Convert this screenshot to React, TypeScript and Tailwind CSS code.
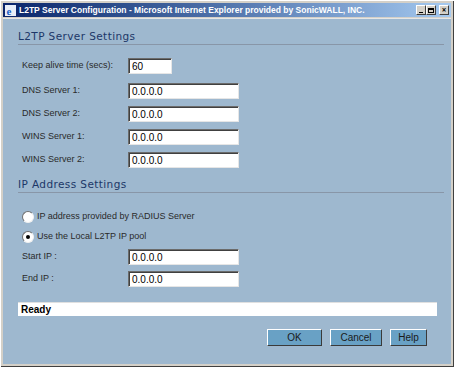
import React from "react";

const sans = "font-['Liberation_Sans',Arial,sans-serif]";

function TextBox({ value, w = "w-[111px]" }: { value: string; w?: string }) {
  return (
    <div
      className={`${w} h-[16px] bg-white border border-t-[#6b6b6b] border-l-[#6b6b6b] border-r-[#e6e6e6] border-b-[#e6e6e6] shadow-[inset_1px_1px_0_#404040] pl-[3px] flex items-center text-[10px] text-black ${sans}`}
    >
      {value}
    </div>
  );
}

function Row({ label, value, w, className = "" }: { label: string; value: string; w?: string; className?: string }) {
  return (
    <div className={`flex items-center h-[16px] ${className}`}>
      <span className={`w-[110px] pl-[4px] text-[9px] text-[#2a2a2a] ${sans}`}>{label}</span>
      <TextBox value={value} w={w} />
    </div>
  );
}

function Heading({ title, className = "" }: { title: string; className?: string }) {
  return (
    <div className={`mr-[7px] border-b border-[#8896a8] h-[14px] flex items-end ${className}`}>
      <span className="font-['DejaVu_Sans',Verdana,sans-serif] text-[10.5px] leading-[14px] tracking-[0.4px] text-[#1c3768] pb-[1px]">
        {title}
      </span>
    </div>
  );
}

function Radio({ checked, label, className = "" }: { checked?: boolean; label: string; className?: string }) {
  return (
    <div className={`flex items-center h-[12px] pl-[4px] ${className}`}>
      <span className="w-[12px] h-[12px] rounded-full bg-white border border-t-[#707070] border-l-[#707070] border-r-[#f0f0f0] border-b-[#f0f0f0] flex items-center justify-center">
        {checked && <span className="w-[4px] h-[4px] rounded-full bg-black" />}
      </span>
      <span className={`ml-[3px] text-[9px] text-[#2a2a2a] ${sans}`}>{label}</span>
    </div>
  );
}

function Btn({ label, w }: { label: string; w: string }) {
  return (
    <button
      className={`${w} h-[17px] bg-[#69a1c5] border border-t-white border-l-white border-r-[#3a3a3a] border-b-[#3a3a3a] text-[10px] text-[#1a1a1a] ${sans}`}
    >
      {label}
    </button>
  );
}

function TitleBtn({ children }: { children: React.ReactNode }) {
  return (
    <span className="w-[10px] h-[10px] bg-[#d4d0c8] border border-t-white border-l-white border-r-[#404040] border-b-[#404040] flex items-end justify-center">
      {children}
    </span>
  );
}

export default function App() {
  return (
    <div className="w-[454px] h-[367px] bg-[#d4d0c8] p-[3px] shadow-[inset_1px_1px_0_#fff,inset_-1px_-1px_0_#404040] flex flex-col">
      {/* title bar */}
      <div className="h-[14px] bg-gradient-to-r from-[#0a246a] to-[#a6caf0] flex items-center pl-[2px] pr-[2px]">
        <svg width="11" height="11" viewBox="0 0 11 11" className="shrink-0">
          <rect x="0" y="0" width="11" height="11" fill="#e8eef8" />
          <text x="1.5" y="9.5" fontSize="11" fontWeight="bold" fill="#1a5fc8" fontFamily="Liberation Serif, serif">e</text>
        </svg>
        <span className={`ml-[3px] text-[8.5px] font-bold text-white whitespace-nowrap ${sans}`}>
          L2TP Server Configuration - Microsoft Internet Explorer provided by SonicWALL, INC.
        </span>
        <div className="ml-auto flex items-center">
          <TitleBtn>
            <span className="w-[4px] h-[1.5px] bg-black mb-[1px]" />
          </TitleBtn>
          <TitleBtn>
            <span className="w-[6px] h-[5px] border border-black border-t-2 mb-[1px]" />
          </TitleBtn>
          <span className="w-[3px]" />
          <TitleBtn>
            <span className="text-[8px] leading-[8px] font-bold text-black">×</span>
          </TitleBtn>
        </div>
      </div>

      {/* content */}
      <div className="flex-1 mt-[1px] bg-[#9eb8cf] border-t border-[#e6e6e6] pl-[15px] flex flex-col">
        <Heading title="L2TP Server Settings" className="mt-[12px]" />
        <Row label="Keep alive time (secs):" value="60" w="w-[44px]" className="mt-[13px]" />
        <Row label="DNS Server 1:" value="0.0.0.0" className="mt-[9px]" />
        <Row label="DNS Server 2:" value="0.0.0.0" className="mt-[7px]" />
        <Row label="WINS Server 1:" value="0.0.0.0" className="mt-[7px]" />
        <Row label="WINS Server 2:" value="0.0.0.0" className="mt-[7px]" />

        <Heading title="IP Address Settings" className="mt-[11px]" />
        <Radio label="IP address provided by RADIUS Server" className="mt-[18px]" />
        <Radio checked label="Use the Local L2TP IP pool" className="mt-[8px]" />
        <Row label="Start IP :" value="0.0.0.0" className="mt-[6px]" />
        <Row label="End IP :" value="0.0.0.0" className="mt-[6px]" />

        <div className={`mt-[15px] mr-[14px] h-[14px] bg-white border-t border-[#e0e0e0] pl-[3px] flex items-center text-[10px] font-bold text-black ${sans}`}>
          Ready
        </div>

        <div className="mt-[13px] flex gap-[8px] pl-[249px]">
          <Btn label="OK" w="w-[55px]" />
          <Btn label="Cancel" w="w-[52px]" />
          <Btn label="Help" w="w-[37px]" />
        </div>
      </div>
    </div>
  );
}
